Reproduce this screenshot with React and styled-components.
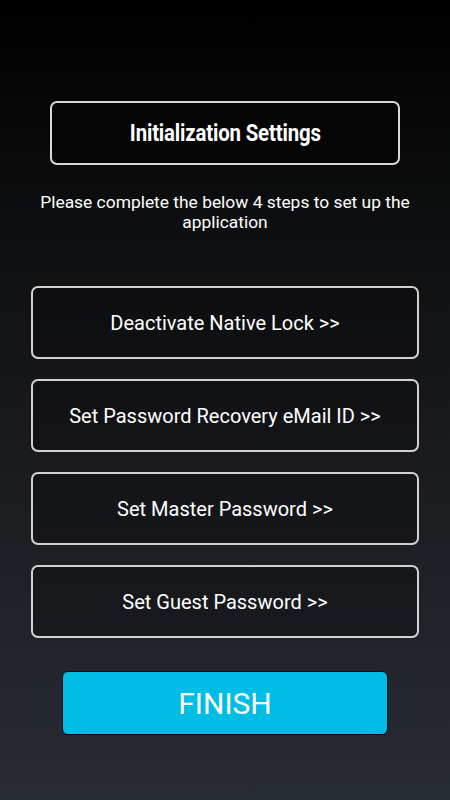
import React from 'react';
import styled, { createGlobalStyle } from 'styled-components';

const GlobalStyle = createGlobalStyle`
  html, body {
    margin: 0;
    padding: 0;
    background: #000;
  }
  * {
    box-sizing: border-box;
  }
`;

const Screen = styled.div`
  align-items: center;
  background: linear-gradient(180deg, #000 0%, #0c0d0e 25%, #1a1c20 60%, #282c33 100%);
  color: #fff;
  display: flex;
  flex-direction: column;
  font-family: Roboto, "Liberation Sans", sans-serif;
  height: 800px;
  padding-top: 101px;
  width: 450px;
`;

const TitleBox = styled.div`
  align-items: center;
  background: #050505;
  border: 2px solid #d8d8d8;
  border-radius: 7px;
  display: flex;
  height: 64px;
  justify-content: center;
  width: 350px;
`;

const Title = styled.span`
  display: inline-block;
  font-size: 24px;
  font-weight: 700;
  letter-spacing: -0.2px;
  transform: scaleX(0.85);
`;

const Intro = styled.p`
  font-size: 17.4px;
  line-height: 20px;
  margin: 27px 0 0;
  padding: 0 20px;
  text-align: center;
  width: 100%;
`;

const Steps = styled.div`
  display: flex;
  flex-direction: column;
  gap: 20px;
  margin-top: 54px;
  width: 388px;
`;

const StepButton = styled.button`
  background: rgba(10, 10, 12, 0.35);
  border: 2px solid #d2d2d2;
  border-radius: 7px;
  color: #fff;
  cursor: pointer;
  font-family: Roboto, "Liberation Sans", sans-serif;
  font-size: 20px;
  height: 73px;
  padding: 0;
  width: 100%;
`;

const FinishButton = styled.button`
  background: #00bde6;
  border: 1px solid #0b0d10;
  border-radius: 6px;
  color: #fff;
  cursor: pointer;
  font-family: Roboto, "Liberation Sans", sans-serif;
  font-size: 30px;
  height: 64px;
  margin-top: 33px;
  padding: 0;
  width: 326px;
`;

const steps = [
  'Deactivate Native Lock >>',
  'Set Password Recovery eMail ID >>',
  'Set Master Password >>',
  'Set Guest Password >>',
];

const App = () => {
  return (
    <>
      <GlobalStyle />
      <Screen>
        <TitleBox>
          <Title>Initialization Settings</Title>
        </TitleBox>
        <Intro>Please complete the below 4 steps to set up the application</Intro>
        <Steps>
          {steps.map((label) => (
            <StepButton key={label}>{label}</StepButton>
          ))}
        </Steps>
        <FinishButton>FINISH</FinishButton>
      </Screen>
    </>
  );
};

export default App;
